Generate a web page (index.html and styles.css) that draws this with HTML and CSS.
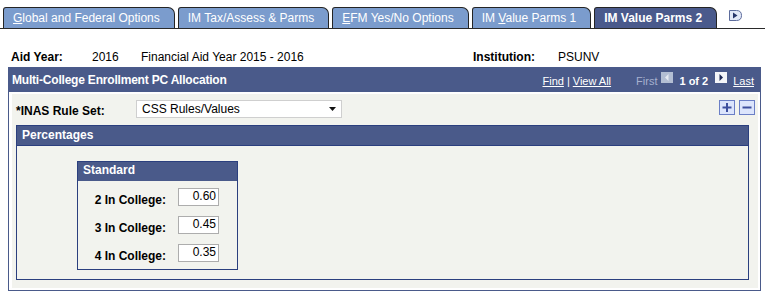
FILE: index.html
```html
<!DOCTYPE html>
<html>
<head>
<meta charset="utf-8">
<title>IM Value Parms 2</title>
<link rel="stylesheet" href="styles.css">
</head>
<body>
<div class="tabs">
  <div class="tab"><u>G</u>lobal and Federal Options</div>
  <div class="tab">IM Tax/Assess &amp; Parms</div>
  <div class="tab"><u>E</u>FM Yes/No Options</div>
  <div class="tab">IM <u>V</u>alue Parms 1</div>
  <div class="tab active">IM Value Parms 2</div>
  <svg class="tab-next" width="13" height="11" viewBox="0 0 13 11"><path d="M0.5 0.5H7.5Q12.5 0.5 12.5 5.5Q12.5 10.5 7.5 10.5H0.5Z" fill="#e3e8f7" stroke="#5d6c9c"/><path d="M4 2.5L8.5 5.5L4 8.5Z" fill="#27356a"/></svg>
</div>

<div class="keyrow">
  <span class="lbl">Aid Year:</span>
  <span>2016</span>
  <span>Financial Aid Year 2015 - 2016</span>
  <span class="lbl">Institution:</span>
  <span>PSUNV</span>
</div>

<div class="panel">
  <div class="panel-head">
    <span class="title">Multi-College Enrollment PC Allocation</span>
    <div class="nav">
      <a class="lnk">Find</a><span class="sep">|</span><a class="lnk">View All</a>
      <span class="first">First</span>
      <svg class="pg pg-prev" width="12" height="11" viewBox="0 0 12 11"><rect x="0" y="0" width="12" height="11" fill="#b3bed3"/><path d="M7.5 2L4 5.5L7.5 9Z" fill="#e6eaf2"/></svg>
      <b class="count">1 of 2</b>
      <svg class="pg pg-next" width="12" height="11" viewBox="0 0 12 11"><rect x="0" y="0" width="12" height="11" fill="#f4f5f8"/><path d="M4.5 2L8 5.5L4.5 9Z" fill="#1f2a55"/></svg>
      <a class="lnk">Last</a>
    </div>
  </div>
  <div class="panel-body">
    <div class="rule-row">
      <span class="lbl rule-lbl">*INAS Rule Set:</span>
      <div class="dropdown"><span>CSS Rules/Values</span><svg width="7" height="4" viewBox="0 0 7 4"><path d="M0 0H7L3.5 4Z" fill="#111"/></svg></div>
      <div class="addrm">
        <svg width="16" height="15" viewBox="0 0 16 15"><rect x="0.5" y="0.5" width="15" height="14" fill="#dce5fc" stroke="#6b7fc6"/><path d="M3.5 7.5H12.5M8 3V12" stroke="#3d4f9e" stroke-width="2"/></svg>
        <svg width="16" height="15" viewBox="0 0 16 15"><rect x="0.5" y="0.5" width="15" height="14" fill="#dce5fc" stroke="#6b7fc6"/><path d="M3.5 7.5H12.5" stroke="#3d4f9e" stroke-width="2"/></svg>
      </div>
    </div>
    <div class="group">
      <div class="group-head">Percentages</div>
      <div class="group-body">
        <div class="std">
          <div class="std-head">Standard</div>
          <div class="std-body">
            <div class="std-row"><span class="lbl">2 In College:</span><span class="num">0.60</span></div>
            <div class="std-row"><span class="lbl">3 In College:</span><span class="num">0.45</span></div>
            <div class="std-row"><span class="lbl">4 In College:</span><span class="num">0.35</span></div>
          </div>
        </div>
      </div>
    </div>
  </div>
</div>
</body>
</html>
```

FILE: styles.css
```css
body {
  margin: 0;
  font-family: "Liberation Sans", Arial, sans-serif;
  font-size: 12px;
  color: #000;
  background: #fff;
}

.lbl {
  font-weight: bold;
}

/* Tabs */
.tabs {
  display: flex;
  align-items: flex-end;
  height: 21px;
  padding: 7px 0 0 3px;
  border-bottom: 1px solid #2a2a2a;
}

.tab {
  box-sizing: border-box;
  height: 21px;
  padding: 1px 14px 0 9px;
  margin-right: 3px;
  border: 1px solid #242424;
  border-bottom: 0;
  border-radius: 3px 7px 0 0;
  background: #7b9ccd;
  color: #fff;
  line-height: 19px;
  white-space: nowrap;
}

.tab.active {
  background: #4a5a8c;
  font-weight: bold;
}

.tab-next {
  margin: 0 0 7px 9px;
}

/* Key row */
.keyrow {
  display: grid;
  grid-template-columns: 81px 49px 332px 85px auto;
  height: 15px;
  padding: 21px 0 0 11px;
  margin-bottom: 2px;
  line-height: 15px;
  white-space: nowrap;
}

/* Main panel */
.panel {
  margin: 0 4px 0 8px;
  border: 1px solid #4a5a8a;
}

.panel-head {
  display: flex;
  justify-content: space-between;
  height: 24px;
  padding: 0 6px 0 3px;
  background: #4a5a8a;
  color: #fff;
}

.title {
  font-weight: bold;
  line-height: 24px;
  letter-spacing: -0.2px;
}

.nav {
  display: flex;
  align-items: center;
  padding-top: 2px;
  font-size: 11px;
  white-space: nowrap;
}

.lnk {
  color: #fff;
  text-decoration: underline;
}

.sep {
  margin: 0 3px;
}

.first {
  margin-left: 25px;
  color: #a7b1cf;
}

.pg {
  align-self: flex-start;
  margin-top: 2px;
}

.pg-prev {
  margin-left: 4px;
  margin-right: 6px;
}

.pg-next {
  margin-left: 7px;
  margin-right: 6px;
}

.count {
  font-weight: bold;
}

.panel-body {
  padding: 6px 3px 8px 4px;
  background: #f2f3ee;
  border: 2px solid #fff;
  border-left-width: 3px;
}

.rule-row {
  display: flex;
  height: 20px;
  margin-bottom: 5px;
}

.rule-lbl {
  width: 120px;
  padding-top: 5px;
  line-height: 13px;
}

.dropdown {
  box-sizing: border-box;
  display: flex;
  align-items: center;
  justify-content: space-between;
  width: 206px;
  height: 18px;
  padding: 0 5px 0 5px;
  border: 1px solid #cfcfcf;
  background: #fff;
  line-height: 16px;
}

.dropdown span {
  align-self: flex-start;
}

.addrm {
  display: flex;
  gap: 4px;
  margin-left: auto;
  height: 15px;
}

/* Percentages group */
.group {
  margin-right: 6px;
  border: 1px solid #2b3f7e;
}

.group-head {
  padding-left: 5px;
  border-bottom: 1px solid #2b3f7e;
  background: #4a5a8a;
  color: #fff;
  font-weight: bold;
  line-height: 19px;
}

.group-body {
  padding: 15px 0 9px 60px;
}

.std {
  box-sizing: border-box;
  width: 161px;
  border: 1px solid #2b3f7e;
}

.std-head {
  padding: 1px 0 4px 5px;
  background: #4a5a8a;
  color: #fff;
  font-weight: bold;
  line-height: 14px;
}

.std-body {
  display: grid;
  row-gap: 10px;
  padding: 7px 0;
}

.std-row {
  display: grid;
  grid-template-columns: 88px 41px;
  column-gap: 12px;
  height: 18px;
}

.std-row .lbl {
  padding-top: 6px;
  line-height: 12px;
  text-align: right;
  white-space: nowrap;
}

.num {
  box-sizing: border-box;
  height: 18px;
  padding-right: 2px;
  border: 1px solid #adadad;
  background: #fff;
  line-height: 14px;
  text-align: right;
}
```
